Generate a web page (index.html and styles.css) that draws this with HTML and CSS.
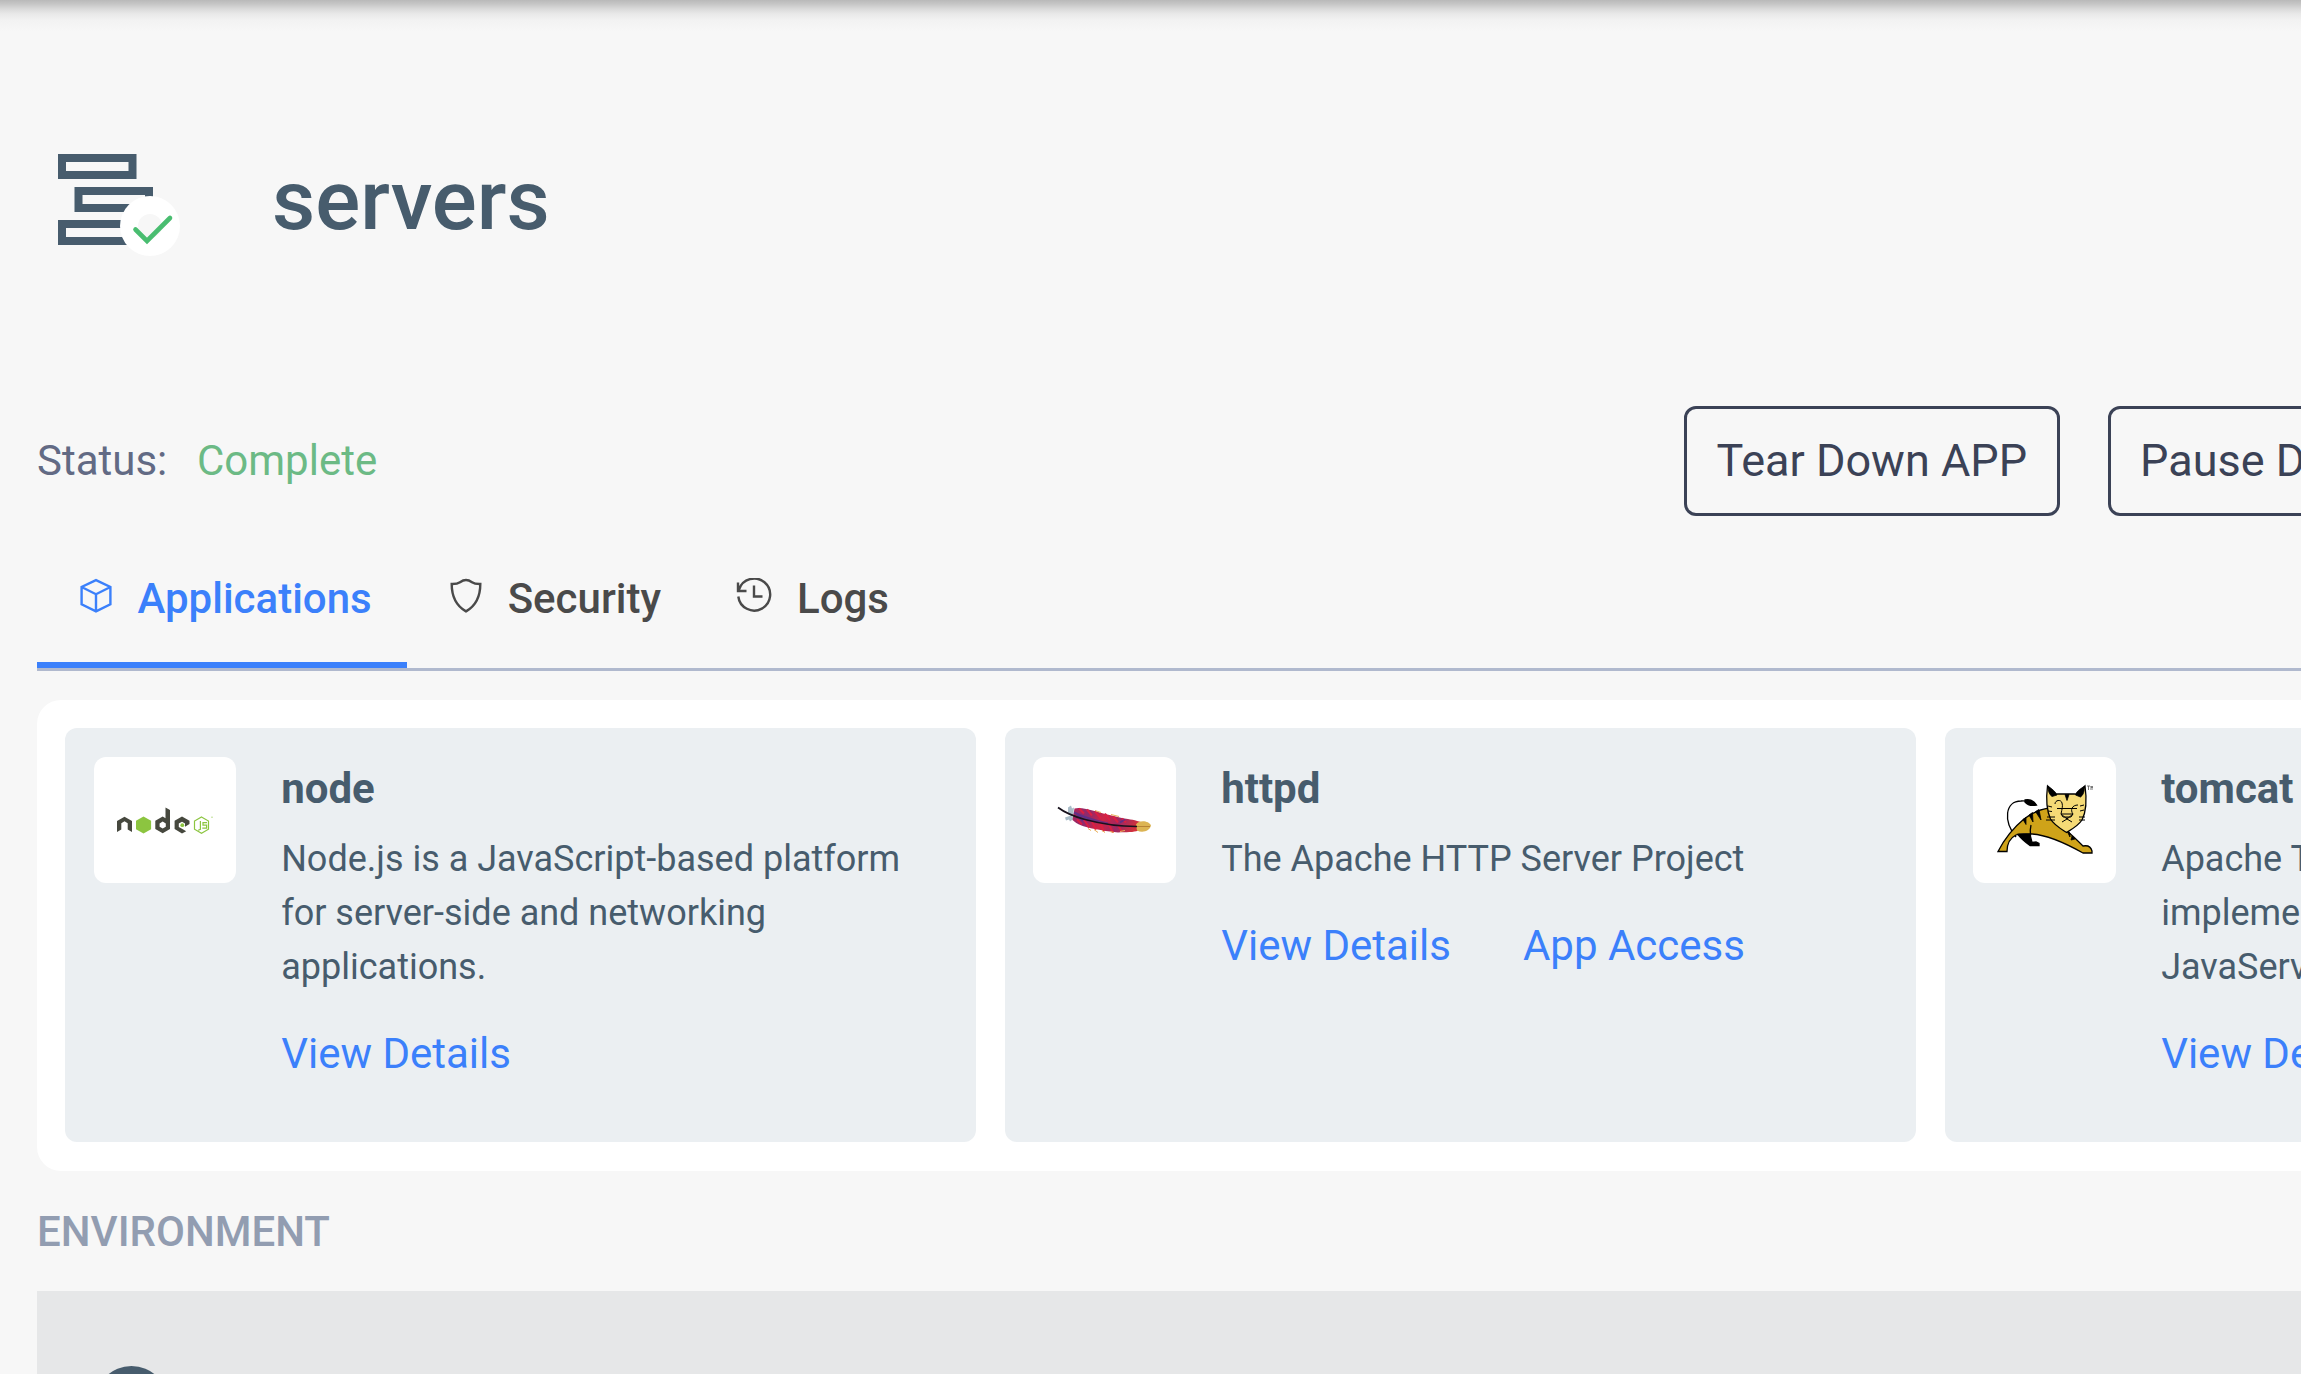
FILE: index.html
```html
<!DOCTYPE html>
<html lang="en">
<head>
<meta charset="utf-8">
<title>servers</title>
<link rel="stylesheet" href="styles.css">
</head>
<body>
<div class="page">
  <header class="head">
    <svg class="head-icon" width="124" height="104" viewBox="0 0 124 104" fill="none">
      <g stroke="#475c6d" stroke-width="8">
        <rect x="4" y="4" width="70.500" height="17"/>
        <rect x="20.500" y="37" width="70.500" height="17"/>
        <rect x="4" y="70" width="70.500" height="17"/>
      </g>
      <circle cx="92" cy="72" r="30" fill="#fff"/>
      <circle cx="92" cy="72" r="12" fill="#f7f7f7"/>
      <path d="M77.500 75.500 89 87 112 64" stroke="#49bd70" stroke-width="4.600" stroke-linecap="round"/>
    </svg>
    <h1 class="title">servers</h1>
  </header>

  <section class="status-row">
    <span class="status-label">Status:</span>
    <span class="status-value">Complete</span>
    <div class="actions">
      <button class="btn">Tear Down APP</button>
      <button class="btn">Pause Deployment</button>
    </div>
  </section>

  <nav class="tabs">
    <a class="tab tab-active">
      <svg class="tab-icon" width="36" height="36" viewBox="0 0 36 36" fill="none" stroke="currentColor" stroke-width="2.400">
        <path d="M18 2.200 32.400 9v17.200L18 33.400 3.600 26.200V9zM3.600 9 18 16.200 32.400 9M18 16.200v17.200"/>
      </svg>
      Applications
    </a>
    <a class="tab tab-security">
      <svg class="tab-icon" width="36" height="36" viewBox="0 0 36 36" fill="none" stroke="currentColor" stroke-width="2.400">
        <path d="M18 2c-2.500 0-4 .8-6 2.200C9.500 5.900 7 6.100 3.700 6 3.700 18 8.500 28 18 33.400 27.500 28 32.300 18 32.300 6 29 6.100 26.500 5.900 24 4.200 22 2.800 20.500 2 18 2z"/>
      </svg>
      Security
    </a>
    <a class="tab">
      <svg class="tab-icon" width="36" height="36" viewBox="0 0 36 36" fill="none" stroke="currentColor" stroke-width="2.400">
        <path d="M3 11.500A16 16 0 1 1 2.300 18.500M2 4.500V13h8.500M18 7.500V18.500h8.500"/>
      </svg>
      Logs
    </a>
  </nav>

  <section class="panel">
    <article class="card">
      <div class="logo">
        <svg width="96" height="96" viewBox="0 2 96 96">
          <g fill="#46483e">
            <path d="M0 61V51l7.500-4.300L15 51v11l-4.300-2.500v-6.300L7.500 51.300 4.300 53.200v6.300L0 62z"/>
            <path fill-rule="evenodd" d="M48.500 37.500 53 40v19l-7.300 4.300L38.300 59v-8.200l7.400-4.200 2.800 1.600zM45.700 51.600 42.600 53.400v3.400l3.100 1.800 3.100-1.800v-3.400z"/>
            <path d="M72.500 54 68 56.800v-3.300L65 51.700l-3.200 1.800v3.400l3.200 1.900 4.200 2.400L65 63.400 57.600 59v-8.300L65 46.500l7.500 4.300z"/>
          </g>
          <path fill="#8cc540" d="m26.500 46.500 7.600 4.300v8.400l-7.600 4.300-7.500-4.300v-8.400z"/>
          <circle cx="65.300" cy="55.200" r="1.900" fill="#8cc540"/>
          <g fill="none" stroke="#8cc540" stroke-width="1.200">
            <path d="m84.500 47 7 4v8.200l-7 4-7-4V51zM83.400 51v8.300l-2.200.9M90 52.600h-4v2.500h3.600v3h-4.300"/>
            <path d="M94 47.200h2.500" stroke-width=".8" opacity=".7"/>
          </g>
        </svg>
      </div>
      <div class="card-body">
        <h2 class="card-title">node</h2>
        <p class="card-text">Node.js is a JavaScript-based platform for server-side and networking applications.</p>
        <div class="links"><a class="link">View Details</a></div>
      </div>
    </article>

    <article class="card">
      <div class="logo">
        <svg width="96" height="96" viewBox="0 1.500 96 96">
          <defs>
            <linearGradient id="feather" x1="0" x2="1" y1="0" y2=".2">
              <stop offset="0" stop-color="#b32357"/>
              <stop offset=".25" stop-color="#8c2b6e"/>
              <stop offset=".5" stop-color="#cf2444"/>
              <stop offset=".75" stop-color="#9c2865"/>
              <stop offset="1" stop-color="#d3313b"/>
            </linearGradient>
          </defs>
          <path fill="#a9bcc8" d="m11 37 3-2 1 3 2-1-1 9-5-3zM8 47l6-2 3 3-4 3-1-2-3 1z"/>
          <path fill="url(#feather)" d="M17.500 38c5-1.500 12 .5 21 2.700C50 44 62 47 71 48.500c6 1 13 2.500 16 4.500l-6 7c-4 2-12 1.500-20 2-8-1-16-2-26-4-8-1.800-15-4-19.500-8.500z"/>
          <path fill="none" stroke="#db1f42" stroke-width="2" d="m22 38 5 5m3-4 5 6m3-4 6 7m4-5 5 7m3-4 5 6m4-4 4 4M20 49l5 5m2-5 5 8m3-6 4 8m4-7 4 9m5-7 4 8m5-7 4 6"/>
          <path fill="none" stroke="#413499" stroke-width="2" opacity=".65" d="M17 42c10 5 20 8 34 11m12-1 5-3m-42 1-6-6"/>
          <path fill="none" stroke="#e9ae58" stroke-width="1" d="m31 58 3 2m3-1 4 3m4-2 3 2m5-1 4 1m6-1 5-1m-30-20 6 2m10 2 8 2"/>
          <path fill="#dcb454" d="M79 54c3-5 13-4 15 1-1 5-8 8-14 5z"/>
          <path fill="none" stroke="#b78336" stroke-width="1" d="M80 56h13"/>
          <path fill="none" stroke="#17111c" stroke-width="1.700" d="M1 37c8 6 16 9 27 12 15 4 30 7 52 7"/>
        </svg>
      </div>
      <div class="card-body">
        <h2 class="card-title">httpd</h2>
        <p class="card-text">The Apache HTTP Server Project</p>
        <div class="links"><a class="link">View Details</a><a class="link">App Access</a></div>
      </div>
    </article>

    <article class="card">
      <div class="logo">
        <svg width="96" height="96" viewBox="0 -4 96 96" fill="none" stroke="#000" stroke-width="1.300">
          <path d="M19 61C6 45 8 25 24 25c3-.5 5 0 7 .5"/>
          <path fill="#000" d="M28 24c4-1 8 0 11.500 5-5 1-9 0-11.500-3z"/>
          <path fill="#cfa319" d="M1 75.500C8 62 16 52 27 43c8-6 17-10 25-11l18 23c6 5 11 10 16 15 5-1 8 1 9 5v2H86C70 68 50 59 35 58c-8 0-12-1-16 1-6 3-9 9-9 16.500z"/>
          <path fill="#000" d="M21 58.500c3 4 8 8 12 11h9v-2l-3-1.500-4 .5-2-8z"/>
          <path d="M34 49c-1 4-1 7-.5 11"/>
          <path fill="#000" stroke-width=".8" d="m26 43.500 3 5v-7zm6-4.500 4 7-.500-9.500zm6.500-3.500L44 44l-2-10.500zM70 55l3 6v-4zm5 5-1 4 4-1z"/>
          <path fill="#f5da76" d="M50.500 10c4 5 6 9 10 8h17c4 1 7-4 10.500-8 2 14 1 26-3 34-4 6-10 9-15.500 12.500C64 53 57 49 53.500 43 49.500 34 49 22 50.500 10z"/>
          <path fill="#000" stroke-width=".8" d="M51 10c4 3 8 6 9 9l-5 1.500c-3-2-4-6-4-10.500zm36.500 0c-4 3-8 5-9 9l5 2c3-2 4-6 4-11zM68 18.500l2 6 2-6z"/>
          <path stroke-width="1" d="M58 28c0-4 6-5 7-1 1 3 0 6-1 11l6 5 6-5c-3-4-1-9 5-9M60 32.500h20M64 38h12m-12 0 2 3h8l2-3m-6 3v2m0 0-5 3m5-3 5 3M50 41h8m-9 3h9m24-3h6m-6 3h6M51 30l4 1m-4 4 4 .500m28-5.500 4-1m-4 6 4-1"/>
          <path stroke="#555" stroke-width=".8" d="M90 10h3m-1.500 0v4m2.500 0v-4l1 2 1-2v4"/>
        </svg>
      </div>
      <div class="card-body">
        <h2 class="card-title">tomcat</h2>
        <p class="card-text">Apache Tomcat is an open source<br>implementation of the Java Servlet,<br>JavaServer Pages</p>
        <div class="links"><a class="link">View Details</a></div>
      </div>
    </article>
  </section>

  <h3 class="section-title">ENVIRONMENT</h3>
  <section class="environment"><span class="env-dot"></span></section>
</div>
</body>
</html>
```
FILE: styles.css
```css
* {
  box-sizing: border-box;
}

body {
  margin: 0;
  background: #f7f7f7;
  font-family: Roboto, "Liberation Sans", sans-serif;
  font-size: 42px;
  overflow: hidden;
}

h1, h2, h3, p {
  margin: 0;
}

.page {
  display: flex;
  flex-direction: column;
  height: 1374px;
  padding-left: 37px;
  overflow: hidden;
  background: linear-gradient(#b9b9b9 0, #c6c6c6 4px, #dadada 9px, #e9e9e9 14px, #f2f2f2 20px, #f7f7f7 31px) no-repeat 0 0 / 100% 31px;
}

.page > * {
  flex: none;
}

.head {
  display: flex;
  align-items: flex-start;
  height: 406px;
  padding: 150px 0 0 21px;
}

.head-icon {
  flex: none;
  margin: 4px 90px 0 0;
}

.title {
  font-size: 84px;
  line-height: 101px;
  font-weight: 500;
  color: #475c6d;
}

.status-row {
  display: flex;
  align-items: center;
  height: 110px;
  line-height: 50px;
  white-space: nowrap;
}

.status-label {
  width: 160px;
  color: #626a84;
}

.status-value {
  color: #6cba85;
}

.actions {
  display: flex;
  gap: 48px;
  margin-left: auto;
  width: 617px;
  flex: none;
}

.btn {
  flex: none;
  height: 110px;
  padding: 0 29.5px 2px;
  border: 3px solid #3b4256;
  border-radius: 12px;
  background: none;
  font: 400 45px Roboto, "Liberation Sans", sans-serif;
  color: #3b4256;
}

.tabs {
  display: flex;
  height: 155px;
  border-bottom: 3px solid #b0b9ce;
}

.tab {
  display: flex;
  align-items: center;
  padding: 12px 35px 0 40px;
  font-weight: 500;
  color: #4a4a4a;
}

.tab-active {
  color: #3b80fb;
  box-shadow: inset 0 -6px #3b80fb;
}

.tab-icon {
  flex: none;
  margin: 0 25px 5px 0;
}

.tab-active .tab-icon {
  margin: 0 24px 5px 0.5px;
}

.tab-security .tab-icon {
  margin: 0 24px 5px 1px;
}

.panel {
  display: flex;
  gap: 28.7px;
  width: 2850px;
  height: 471px;
  margin-top: 29px;
  padding: 28px;
  padding-bottom: 29px;
  border-radius: 24px;
  background: #fff;
}

.card {
  display: flex;
  flex: none;
  width: 911.3px;
  padding: 29px 28.5px;
  border-radius: 12px;
  background: #ebeff2;
  color: #475c6d;
}

.logo {
  display: flex;
  align-items: center;
  justify-content: center;
  flex: none;
  width: 142.5px;
  height: 126px;
  border-radius: 12px;
  background: #fff;
}

.card-body {
  width: 650px;
  margin-left: 45.2px;
}

.card-title {
  height: 75px;
  font-size: 42px;
  line-height: 63px;
  font-weight: 700;
}

.card-text {
  font-size: 36px;
  line-height: 54px;
}

.links {
  display: flex;
  gap: 72px;
  margin-top: 28px;
  line-height: 63px;
}

.link {
  color: #3b80fb;
}

.section-title {
  height: 120px;
  font-size: 42px;
  line-height: 121px;
  font-weight: 500;
  color: #929db1;
}

.environment {
  height: 240px;
  padding: 75px 0 0 58px;
  background: #e6e7e8;
}

.env-dot {
  display: block;
  width: 73px;
  height: 73px;
  border-radius: 50%;
  background: #475c6d;
}
```
